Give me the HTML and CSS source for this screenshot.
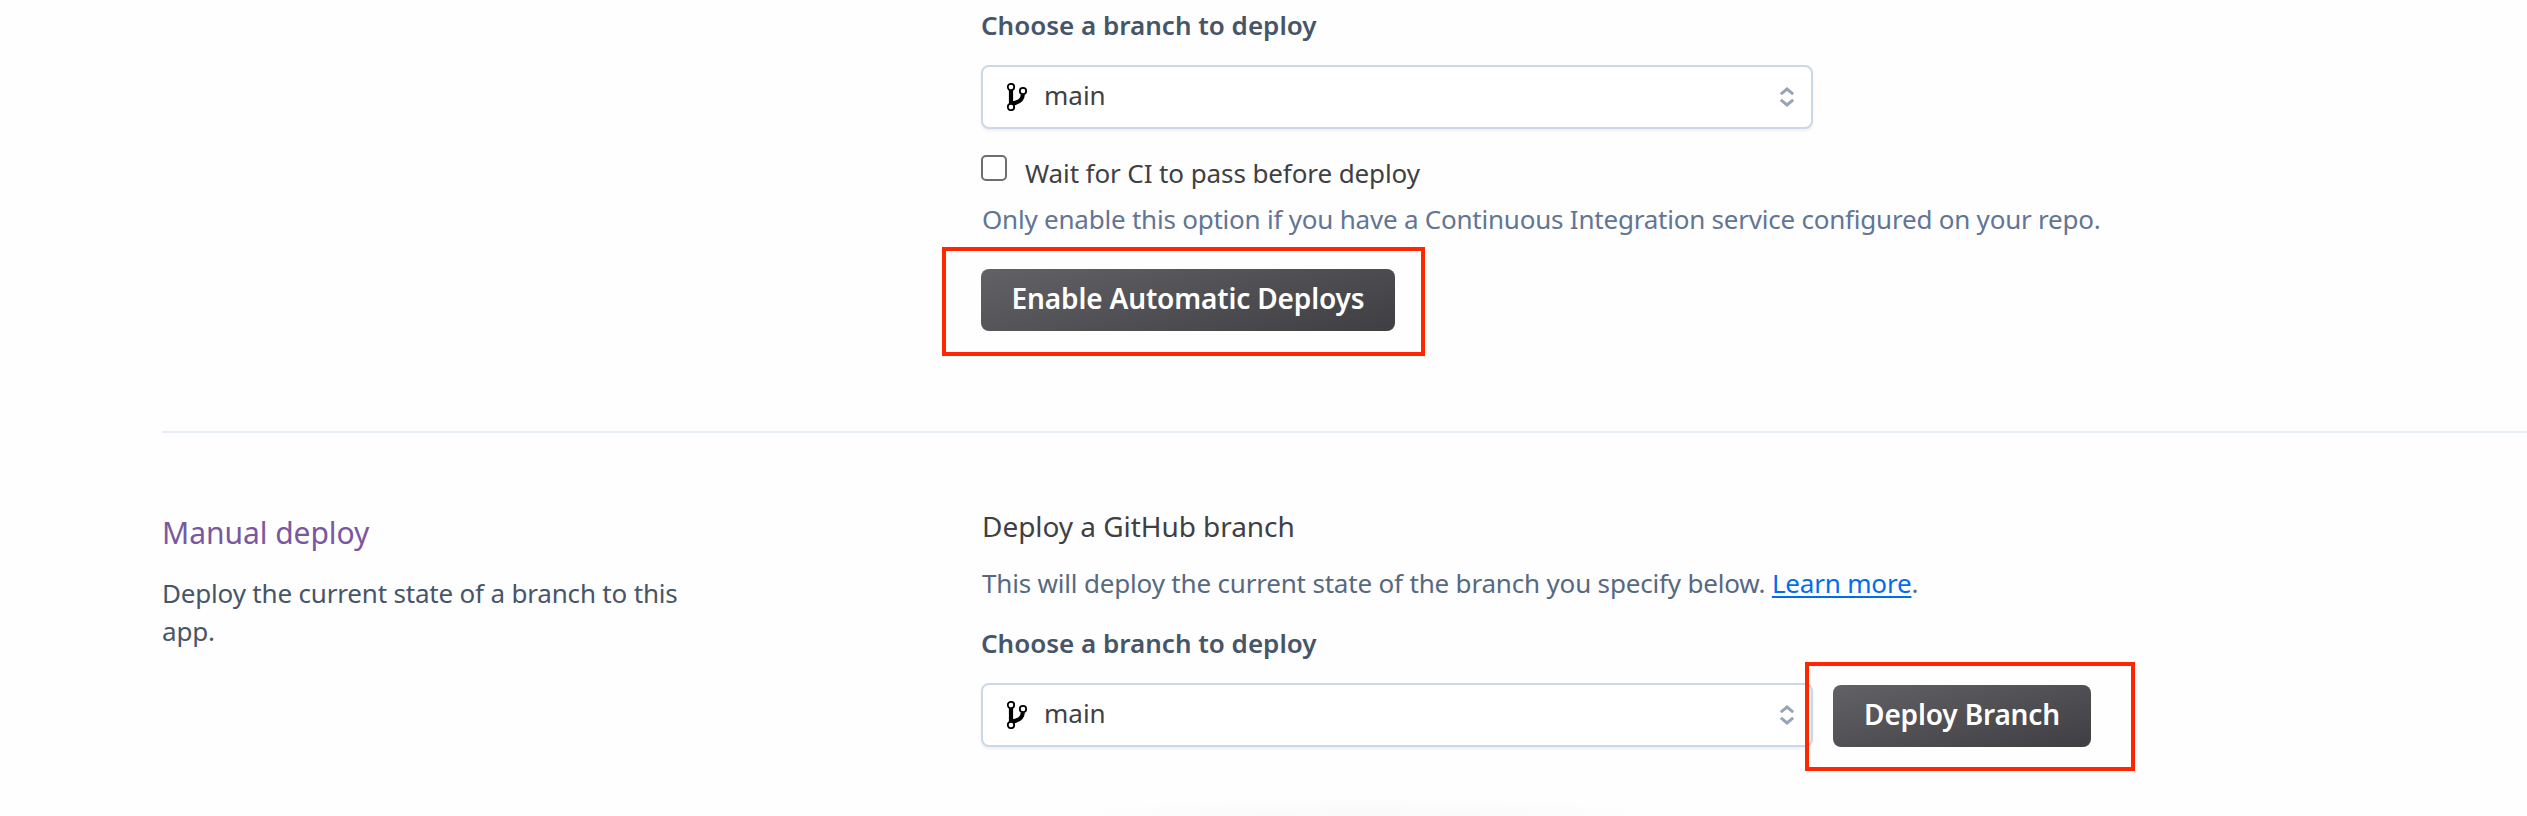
FILE: index.html
```html
<!DOCTYPE html>
<html lang="en">
<head>
<meta charset="utf-8">
<title>Deploy</title>
<link rel="stylesheet" href="styles.css">
</head>
<body>
<svg class="defs" width="0" height="0" aria-hidden="true">
  <symbol id="fork" viewBox="0 0 22 28">
    <path d="M5 7v14M5 20.500c8-.5 11.500-3.500 11.800-9" fill="none" stroke="#000" stroke-width="4.200"/>
    <g fill="#fff" stroke="#000" stroke-width="1.800"><circle cx="5" cy="4" r="3.200"/><circle cx="17" cy="8" r="3.200"/><circle cx="5" cy="24" r="3.200"/></g>
  </symbol>
  <symbol id="sort" viewBox="0 0 14 20">
    <path d="M.8 7.200L7 2l6.200 5.200M.8 12.800L7 18l6.200-5.200" fill="none" stroke="#97a3b6" stroke-width="3"/>
  </symbol>
</svg>
<main class="page">
  <section class="row automatic">
    <div class="content">
      <label class="label">Choose a branch to deploy</label>
      <div class="select">
        <svg class="fork"><use href="#fork"/></svg><span class="value">main</span><svg class="sort"><use href="#sort"/></svg>
      </div>
      <label class="check"><input type="checkbox" class="box"><span class="check-text">Wait for CI to pass before deploy</span></label>
      <p class="hint">Only enable this option if you have a Continuous Integration service configured on your repo.</p>
      <div class="action"><button class="button enable"><span>Enable Automatic Deploys</span></button><i class="mark mark-enable"></i></div>
    </div>
  </section>
  <section class="row manual">
    <div class="aside">
      <h2 class="heading">Manual deploy</h2>
      <p class="description">Deploy the current state of a branch to this app.</p>
    </div>
    <div class="content">
      <h3 class="subheading">Deploy a GitHub branch</h3>
      <p class="intro">This will deploy the current state of the branch you specify below. <a class="link" href="#">Learn more</a>.</p>
      <label class="label">Choose a branch to deploy</label>
      <div class="controls">
        <div class="select">
          <svg class="fork"><use href="#fork"/></svg><span class="value">main</span><svg class="sort"><use href="#sort"/></svg>
        </div>
        <div class="action"><button class="button deploy"><span>Deploy Branch</span></button><i class="mark mark-deploy"></i></div>
      </div>
      <div class="glow"></div>
    </div>
  </section>
</main>
</body>
</html>
```

FILE: styles.css
```css
* { box-sizing: border-box; margin: 0; padding: 0; }
body { background: #fefefe; color: #3f3f44; font: 400 26px/38px "Noto Sans", "Open Sans", sans-serif; overflow: hidden; }
.defs { display: block; }
.page { height: 816px; padding-left: 162px; overflow: hidden; }
.row { display: grid; grid-template-columns: 819px 1fr; white-space: nowrap; }
.content { grid-column: 2; }
.automatic { height: 433px; padding-top: 6px; border-bottom: 2px solid #e7ecf3; }
.label { display: block; color: #475569; font-weight: 600; }
.select { display: flex; align-items: center; width: 832px; height: 64px; margin-top: 21px; padding: 0 17px 0 23px; background: #fff; border: 2px solid #cbd8e8; border-radius: 8px; box-shadow: 0 2px 3px #00000010; }
.fork { width: 22px; height: 28px; }
.sort { width: 14px; height: 20px; margin-left: auto; }
.value { margin-left: 16px; padding-bottom: 4px; }
.check { display: flex; margin-top: 25px; }
.box { appearance: none; width: 26px; height: 26px; margin-top: 1px; border: 2px solid #6e6e6e; border-radius: 5px; background: #fff; }
.check-text { margin-left: 18px; letter-spacing: -.1px; }
.hint { margin-top: 8px; padding-left: 1px; color: #627594; letter-spacing: -.22px; }
.action { position: relative; display: flex; width: max-content; }
.automatic .action { margin-top: 31px; }
.button { height: 62px; padding-bottom: 4px; border: 0; border-radius: 8px; background: linear-gradient(165deg, #626266, #3f3e43); color: #fff; font: 600 28px/38px "Noto Sans", "Open Sans", sans-serif; letter-spacing: -.15px; }
.enable { width: 414px; }
.deploy { width: 258px; }
.mark { position: absolute; border: 4px solid #ff2600; height: 109px; pointer-events: none; }
.mark-enable { left: -39px; top: -22px; width: 483px; }
.mark-deploy { left: -28px; top: -23px; width: 330px; }
.manual { grid-template-rows: 383px; }
.aside { width: 540px; padding-top: 81px; white-space: normal; }
.heading { color: #79589f; font-size: 30px; font-weight: 400; letter-spacing: -.05px; }
.description { margin-top: 22px; color: #475569; letter-spacing: -.18px; }
.manual .content { padding-top: 74px; }
.subheading { padding-left: 1px; font-size: 28px; font-weight: 400; letter-spacing: -.05px; }
.intro { margin: 19px 0 22px; padding-left: 1px; color: #566981; letter-spacing: -.18px; }
.link { color: #006deb; text-decoration-thickness: 2px; text-underline-offset: 3px; }
.controls { display: flex; align-items: flex-end; gap: 20px; }
.glow { width: 580px; height: 20px; margin: 49px 0 0 95px; background: radial-gradient(ellipse 50% 100% at bottom, #fafafa 30%, #fefefe); }
```
